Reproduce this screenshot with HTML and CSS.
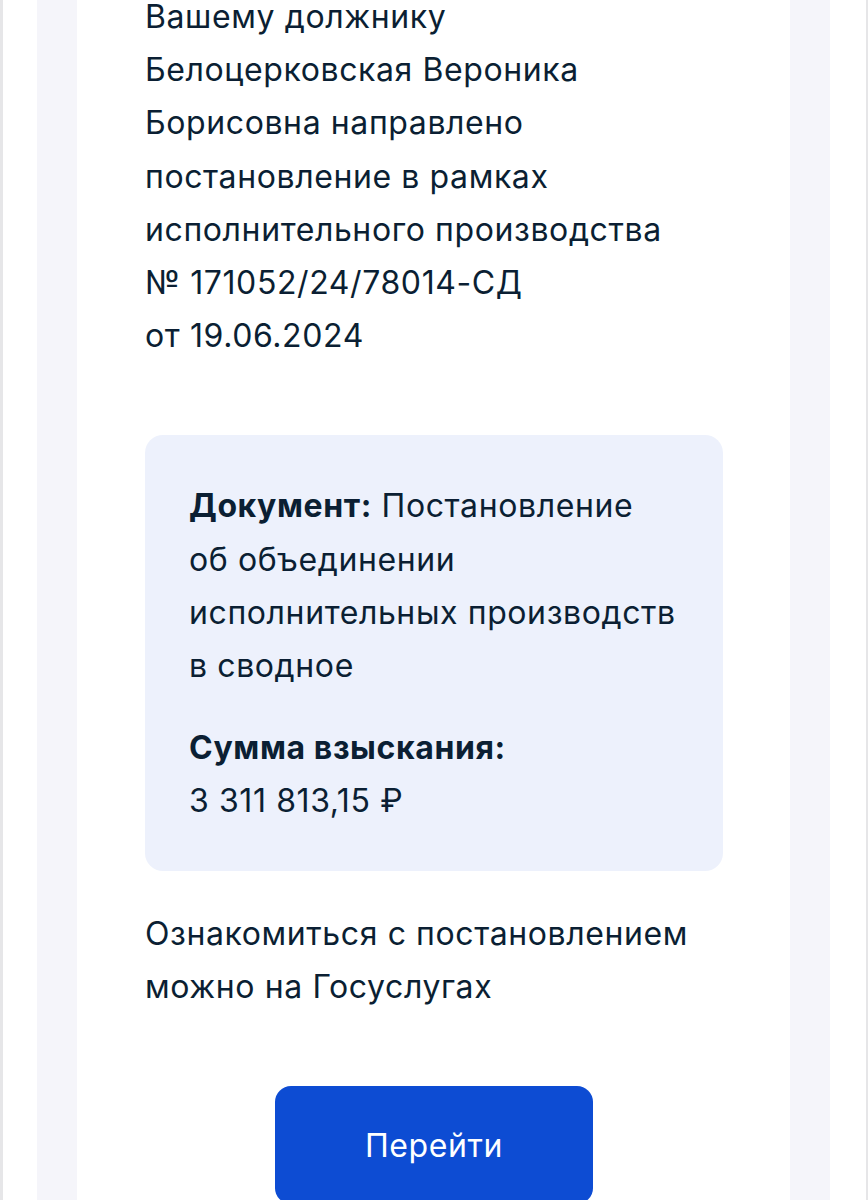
FILE: index.html
```html
<!DOCTYPE html>
<html lang="ru">
<head>
<meta charset="utf-8">
<link rel="stylesheet" href="styles.css">
</head>
<body>
<div class="frame">
  <div class="column">
    <div class="card">
      <p class="text intro">Вашему должнику<br>Белоцерковская Вероника<br>Борисовна направлено<br>постановление в рамках<br>исполнительного производства<br>№ 171052/24/78014-СД<br>от 19.06.2024</p>
      <div class="info">
        <p class="text"><b>Документ:</b> Постановление<br>об объединении<br>исполнительных производств<br>в сводное</p>
        <p class="text sum"><b>Сумма взыскания:</b><br>3 311 813,15 ₽</p>
      </div>
      <p class="text outro">Ознакомиться с постановлением<br>можно на Госуслугах</p>
      <div class="actions"><a class="button" href="#">Перейти</a></div>
    </div>
  </div>
</div>
</body>
</html>
```
FILE: styles.css
```css
html, body {
  margin: 0;
  padding: 0;
  background: #ffffff;
  height: 1200px;
  overflow: hidden;
}
body {
  font-family: Inter, "Liberation Sans", Arial, sans-serif;
  color: #0b1f33;
}
.frame {
  height: 1200px;
  border-left: 3px solid #e6e6e8;
  border-right: 2px solid #e6e6e8;
  padding: 0 36px 0 34px;
  box-sizing: border-box;
}
.column {
  background: #f5f5fa;
  padding: 0 40px;
  height: 100%;
}
.card {
  display: flow-root;
  background: #ffffff;
  height: 100%;
  padding: 0 67px 0 68px;
  box-sizing: border-box;
}
.text {
  font-size: 32px;
  letter-spacing: 0.6px;
  line-height: 53.2px;
  margin: 0;
}
.text b {
  font-weight: 700;
}
.intro {
  margin-top: -10px;
}
.info {
  margin-top: 73px;
  background: #edf1fc;
  border-radius: 18px;
  padding: 44px 44px 43px 44px;
}
.sum {
  margin-top: 29px;
}
.outro {
  margin-top: 36px;
}
.actions {
  display: flex;
  justify-content: center;
  margin-top: 73px;
}
.button {
  display: flex;
  align-items: center;
  justify-content: center;
  width: 318px;
  height: 118px;
  background: #0d4cd3;
  color: #ffffff;
  border-radius: 16px;
  text-decoration: none;
  font-size: 32px;
  letter-spacing: 0.6px;
}
```
